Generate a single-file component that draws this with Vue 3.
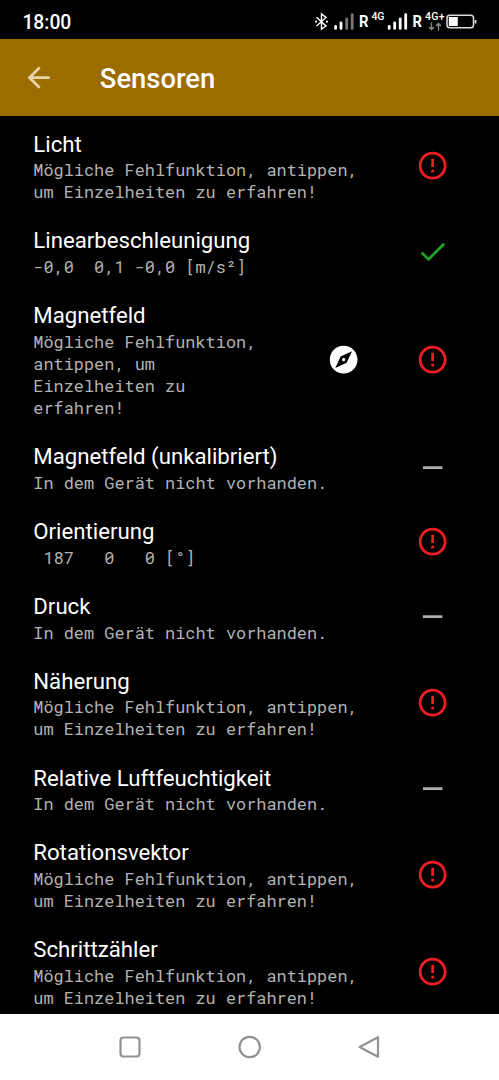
<template>
  <div class="phone">
    <div class="status-bar">
      <span class="clock">18:00</span>
      <svg class="status-icons" width="166" height="28" viewBox="312 8 166 28">
        <g fill="none" stroke="#fff" stroke-width="1.4">
          <path d="M316.5 17.2 L326 26 L321.5 29.2 V14 L326 17.4 L316.5 26" />
          <path d="M315 21.6h2M326 21.6h2" stroke-width="1.8" />
        </g>
        <g stroke-width="2.8" stroke-linecap="round">
          <path d="M335.6 26.4v2M341 22.8v5.6" stroke="#fff" />
          <path d="M346.7 19v9.4M352.2 14.6v13.8" stroke="#777" />
          <path d="M389.2 26.4v2M394.7 22.8v5.6M400.2 19v9.4M405.7 14.6v13.8" stroke="#fff" />
        </g>
        <text class="roaming" x="359" y="27.4" textLength="9.5" lengthAdjust="spacingAndGlyphs">R</text>
        <text class="roaming" x="412.5" y="27.4" textLength="9.5" lengthAdjust="spacingAndGlyphs">R</text>
        <text class="net" x="371.5" y="20" textLength="13">4G</text>
        <text class="net" x="425" y="20" textLength="19.5">4G+</text>
        <path d="M431.5 22.5v7M429 27l2.5 2.6L434 27M438.5 30.5v-7M436 26l2.5-2.6L441 26" fill="none" stroke="#888" stroke-width="1.4" />
        <rect x="447" y="15.2" width="26.5" height="12.6" rx="2.8" fill="none" stroke="#ddd" stroke-width="1.5" />
        <rect x="448.8" y="17" width="9" height="9" fill="#fff" />
        <path d="M475.5 20v3.5" stroke="#ddd" stroke-width="1.8" />
      </svg>
    </div>

    <header class="toolbar">
      <svg class="back" viewBox="0 0 24 24">
        <path d="M20 11H7.83l5.59-5.59L12 4l-8 8 8 8 1.41-1.41L7.83 13H20v-2z" />
      </svg>
      <h1>Sensoren</h1>
    </header>

    <main class="list">
      <div v-for="sensor in sensors" :key="sensor.name" class="row">
        <div class="text">
          <div class="name">{{ sensor.name }}</div>
          <div class="info">{{ sensor.info }}</div>
        </div>
        <svg v-if="sensor.compass" class="icon compass" viewBox="0 0 24 24">
          <path :d="icons.compass" />
        </svg>
        <svg class="icon" :class="sensor.state" viewBox="0 0 24 24">
          <path :d="icons[sensor.state]" />
        </svg>
      </div>
    </main>

    <nav class="nav-bar">
      <svg width="24" height="24" viewBox="0 0 24 24">
        <rect x="2.5" y="2.5" width="19" height="19" rx="3" />
      </svg>
      <svg width="24" height="24" viewBox="0 0 24 24">
        <circle cx="11.7" cy="12" r="10.2" />
      </svg>
      <svg width="24" height="24" viewBox="0 0 24 24">
        <path d="M21 2.2v19.6L2.6 12z" />
      </svg>
    </nav>
  </div>
</template>

<script setup>
const FAULT = 'Mögliche Fehlfunktion, antippen,\num Einzelheiten zu erfahren!'
const MISSING = 'In dem Gerät nicht vorhanden.'

const sensors = [
  { name: 'Licht', info: FAULT, state: 'error' },
  { name: 'Linearbeschleunigung', info: '-0,0  0,1 -0,0 [m/s²]', state: 'ok' },
  {
    name: 'Magnetfeld',
    info: 'Mögliche Fehlfunktion,\nantippen, um\nEinzelheiten zu\nerfahren!',
    state: 'error',
    compass: true
  },
  { name: 'Magnetfeld (unkalibriert)', info: MISSING, state: 'none' },
  { name: 'Orientierung', info: ' 187   0   0 [°]', state: 'error' },
  { name: 'Druck', info: MISSING, state: 'none' },
  { name: 'Näherung', info: FAULT, state: 'error' },
  { name: 'Relative Luftfeuchtigkeit', info: MISSING, state: 'none' },
  { name: 'Rotationsvektor', info: FAULT, state: 'error' },
  { name: 'Schrittzähler', info: FAULT, state: 'error' }
]

const icons = {
  error: 'M11 15h2v2h-2zm0-8h2v6h-2zm.99-5C6.47 2 2 6.48 2 12s4.47 10 9.99 10C17.52 22 22 17.52 22 12S17.52 2 11.99 2zM12 20c-4.42 0-8-3.58-8-8s3.58-8 8-8 8 3.58 8 8-3.58 8-8 8z',
  ok: 'M9 16.17L4.83 12l-1.42 1.41L9 19 21 7l-1.41-1.41z',
  none: 'M19 13H5v-2h14v2z',
  compass: 'M12 10.9c-.61 0-1.1.49-1.1 1.1s.49 1.1 1.1 1.1c.61 0 1.1-.49 1.1-1.1s-.49-1.1-1.1-1.1zM12 2C6.48 2 2 6.48 2 12s4.48 10 10 10 10-4.48 10-10S17.52 2 12 2zm2.19 12.19L6 18l3.81-8.19L18 6l-3.81 8.19z'
}
</script>

<style>
body {
  background: #000;
}
</style>

<style scoped>
.phone {
  display: flex;
  flex-direction: column;
  width: 499px;
  height: 1080px;
  overflow: hidden;
  background: #000;
  color: #fff;
  font-family: Roboto, sans-serif;
}

.status-bar {
  display: flex;
  flex: none;
  align-items: flex-start;
  justify-content: space-between;
  height: 39px;
  padding: 0 21px 0 22.4px;
  box-sizing: border-box;
}

.clock {
  margin-top: 11px;
  font-size: 19.3px;
  font-weight: 500;
  line-height: 24px;
}

.status-icons {
  margin-top: 8px;
}

.roaming {
  fill: #fff;
  font-size: 16px;
  font-weight: 700;
}

.net {
  fill: #fff;
  font-size: 10.5px;
  font-weight: 500;
}

.toolbar {
  display: flex;
  flex: none;
  align-items: center;
  height: 77px;
  padding-left: 22px;
  background: #9b6c00;
}

.back {
  width: 33.3px;
  height: 33.3px;
  fill: #e8d4a8;
}

h1 {
  margin: 2px 0 0 44.5px;
  font-size: 27.4px;
  font-weight: 500;
  line-height: 32px;
}

.list {
  flex: 1;
  min-height: 0;
  padding-top: 0.8px;
  overflow: hidden;
}

.row {
  display: flex;
  align-items: center;
  padding: 13.8px 50px 10.4px 33.3px;
}

.text {
  flex: 1;
}

.name {
  margin-bottom: 2.3px;
  font-size: 22.2px;
  line-height: 26.3px;
}

.info {
  color: #b3b3b3;
  font-family: 'Roboto Mono', 'DejaVu Sans Mono', monospace;
  font-size: 16.9px;
  line-height: 22.05px;
  white-space: pre;
}

.icon {
  flex: none;
  width: 33.3px;
  height: 33.3px;
  margin-top: -2.8px;
}

.compass {
  margin-right: 55.5px;
  fill: #fff;
}

.error {
  fill: #f21d24;
}

.ok {
  fill: #22a522;
}

.none {
  fill: #b0b0b0;
}

.nav-bar {
  display: flex;
  flex: none;
  align-items: center;
  justify-content: center;
  gap: 95.5px;
  height: 66.5px;
  background: #fff;
}

.nav-bar svg {
  fill: none;
  stroke: #929292;
  stroke-width: 2.2;
  stroke-linejoin: round;
}
</style>
